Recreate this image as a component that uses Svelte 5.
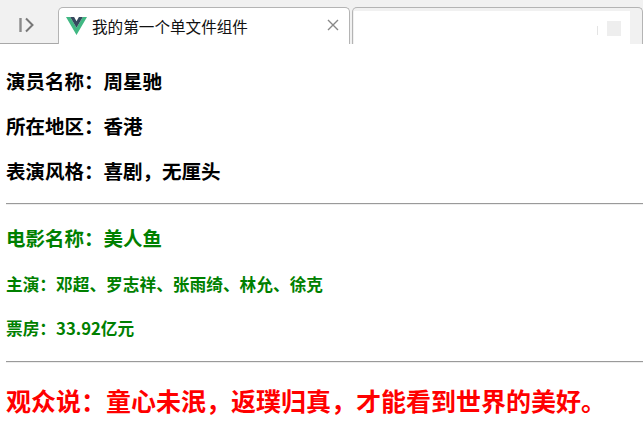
<script>
  const actor = [
    "演员名称：周星驰",
    "所在地区：香港",
    "表演风格：喜剧，无厘头",
  ];
</script>

<div class="browser">
  <div class="tabbar">
    <div class="side">
      <svg width="18" height="16" viewBox="0 0 18 16">
        <path d="M2.5 1v14" stroke="#8a8a8a" stroke-width="2.4" fill="none" />
        <path d="M8 1.5 14.5 8 8 14.5" stroke="#777" stroke-width="2" fill="none" />
      </svg>
    </div>
    <div class="tab active">
      <svg class="logo" width="21" height="18" viewBox="0 0 21 18">
        <path d="M0 0h4.2l6.3 10.8L16.8 0H21L10.5 18z" fill="#41b883" />
        <path d="M4.2 0h3.9l2.4 4.2L12.9 0h3.9l-6.3 10.8z" fill="#35495e" />
      </svg>
      <span class="title">我的第一个单文件组件</span>
      <svg class="close" width="12" height="12" viewBox="0 0 12 12">
        <path d="M1 1l10 10M11 1 1 11" stroke="#888" stroke-width="1.4" fill="none" />
      </svg>
    </div>
    <div class="tab blank">
      <div class="mask">
        <span class="tick"></span>
        <span class="smudge"></span>
      </div>
    </div>
  </div>

  <main>
    <section class="actor">
      {#each actor as line}
        <h3>{line}</h3>
      {/each}
    </section>
    <hr />
    <section class="movie">
      <h3>电影名称：美人鱼</h3>
      <h4>主演：邓超、罗志祥、张雨绮、林允、徐克</h4>
      <h4>票房：33.92亿元</h4>
    </section>
    <hr />
    <h1>观众说：童心未泯，返璞归真，才能看到世界的美好。</h1>
  </main>
</div>

<style>
  :global(body) {
    background: #fff;
  }

  .browser {
    width: 643px;
    height: 442px;
    overflow: hidden;
    font-family: "Noto Sans CJK SC", "Liberation Sans", sans-serif;
  }

  .tabbar {
    display: flex;
    align-items: flex-end;
    height: 44px;
    background: #f1f1f1;
    box-sizing: border-box;
    padding-top: 7px;
  }

  .side {
    width: 58px;
    height: 37px;
    box-sizing: border-box;
    border-bottom: 1px solid #a8a8a8;
    display: flex;
    padding: 10px 0 0 18px;
  }

  .tab {
    height: 37px;
    box-sizing: border-box;
    border: 1px solid #b4b4b4;
    border-bottom: none;
    border-radius: 5px 5px 0 0;
    background: #fff;
  }

  .active {
    width: 292px;
    display: flex;
    align-items: center;
    padding: 0 10px 1px 7px;
  }

  .logo {
    flex: none;
  }

  .title {
    margin-left: 5px;
    font-size: 15.6px;
    line-height: 20px;
    color: #111;
    flex: 1;
    white-space: nowrap;
  }

  .close {
    flex: none;
    margin-bottom: 2px;
  }

  .blank {
    margin-left: 2px;
    width: 291px;
    background: #f1f1f1;
    padding: 3px 0 0 1px;
  }

  .mask {
    width: 276px;
    height: 34px;
    background: #fff;
    position: relative;
  }

  .tick {
    position: absolute;
    left: 243px;
    top: 15px;
    width: 1px;
    height: 9px;
    background: #e4e4e4;
  }

  .smudge {
    position: absolute;
    left: 253px;
    top: 10px;
    width: 14px;
    height: 15px;
    background: #eeeeee;
  }

  main {
    padding: 0 0 0 6px;
  }

  h1,
  h3,
  h4 {
    margin: 0;
    font-weight: bold;
    white-space: nowrap;
  }

  .actor {
    display: flex;
    flex-direction: column;
    gap: 19px;
    padding-top: 24px;
    color: #000;
  }

  h3 {
    font-size: 19.5px;
    line-height: 26px;
  }

  h4 {
    font-size: 16.7px;
    line-height: 22px;
  }

  hr {
    margin: 19px 0 0;
    border: none;
    border-top: 1px solid #9a9a9a;
    border-bottom: 1px solid #eee;
    height: 0;
  }

  .movie {
    color: green;
    display: flex;
    flex-direction: column;
    padding-top: 20px;
  }

  .movie h4 {
    margin-top: 22px;
  }

  .movie + hr {
    margin-top: 22px;
  }

  h1 {
    margin-top: 21px;
    font-size: 25px;
    line-height: 32px;
    color: #f00;
  }
</style>
